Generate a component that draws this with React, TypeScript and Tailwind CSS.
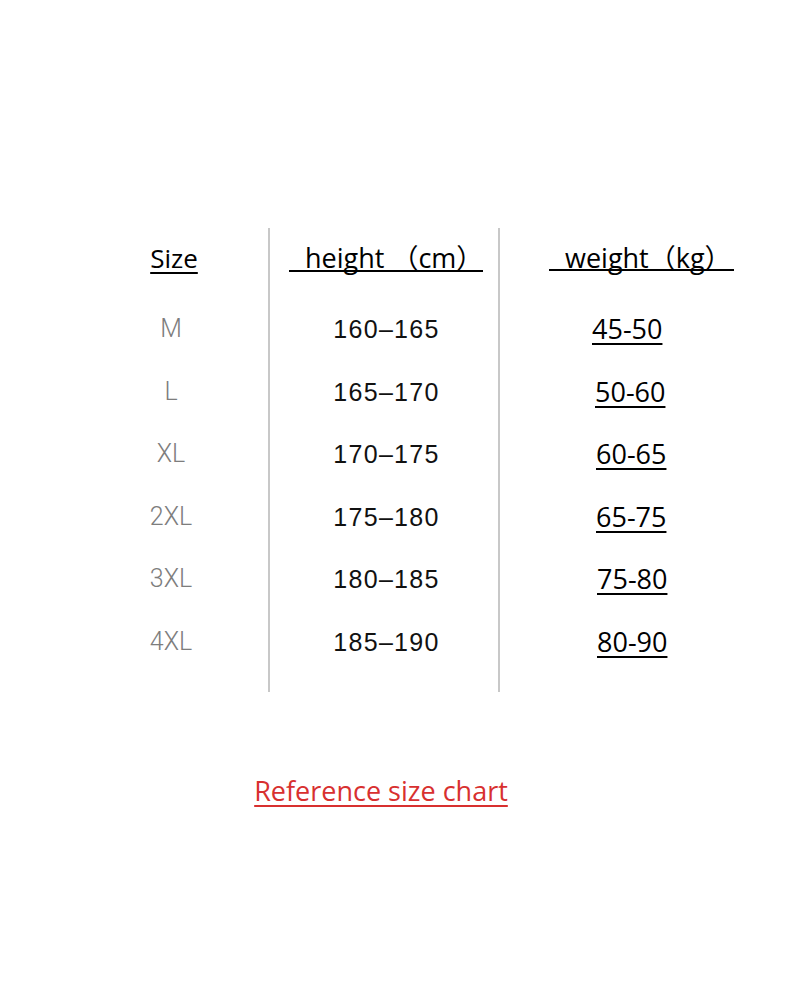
const rows = [
  { size: 'M', height: '160–165', weight: '45-50', pad: 'pl-[92px]' },
  { size: 'L', height: '165–170', weight: '50-60', pad: 'pl-[95px]' },
  { size: 'XL', height: '170–175', weight: '60-65', pad: 'pl-[96px]' },
  { size: '2XL', height: '175–180', weight: '65-75', pad: 'pl-[96px]' },
  { size: '3XL', height: '180–185', weight: '75-80', pad: 'pl-[97px]' },
  { size: '4XL', height: '185–190', weight: '80-90', pad: 'pl-[97px]' },
];

const sans = "font-['Open_Sans','Noto_Sans_CJK_SC',sans-serif]";

export default function App() {
  return (
    <div className="min-h-screen bg-white pt-[228px]">
      <div className="flex h-[464px] overflow-hidden">
        {/* size column */}
        <div className="w-[268px] flex flex-col">
          <div className={`h-[70px] pl-[80px] flex justify-center leading-[60px] text-[26px] text-black ${sans}`}>
            <span className="underline decoration-2 underline-offset-[4px]">Size</span>
          </div>
          {rows.map((r) => (
            <div
              key={r.size}
              className="h-[62.5px] pl-[74px] flex justify-center leading-[62.5px] text-[25px] font-light text-[#7d7d7d] font-['Roboto',sans-serif]"
            >
              {r.size}
            </div>
          ))}
        </div>

        <div className="w-[2px] bg-[#c8c8c8]" />

        {/* height column */}
        <div className="w-[228px] flex flex-col">
          <div className={`h-[70px] pl-[19px] leading-[60px] text-[27px] text-black ${sans}`}>
            <span className="inline-block w-[194px] h-[44px] pl-[16px] border-b-2 border-black whitespace-pre">
              height （cm）
            </span>
          </div>
          {rows.map((r) => (
            <div
              key={r.height}
              className="h-[62.5px] pl-[5px] flex justify-center leading-[62.5px] text-[25px] tracking-[1.3px] text-[#111111] font-['Liberation_Sans',Arial,sans-serif]"
            >
              {r.height}
            </div>
          ))}
        </div>

        <div className="w-[2px] bg-[#c8c8c8]" />

        {/* weight column */}
        <div className="flex-1 flex flex-col">
          <div className={`h-[70px] pl-[49px] leading-[60px] text-[27px] text-black ${sans}`}>
            <span className="inline-block w-[185px] h-[43px] pl-[16px] border-b-2 border-black whitespace-pre">
              weight（kg）
            </span>
          </div>
          {rows.map((r) => (
            <div key={r.weight} className={`h-[62.5px] ${r.pad} leading-[62.5px] text-[27px] text-black ${sans}`}>
              <span className="underline decoration-2 underline-offset-[4px]">{r.weight}</span>
            </div>
          ))}
        </div>
      </div>

      <div className="mt-[79px] flex justify-center pr-[28px]">
        <span className={`text-[27px] text-[#d8302f] underline decoration-2 underline-offset-[4px] ${sans}`}>
          Reference size chart
        </span>
      </div>
    </div>
  );
}
